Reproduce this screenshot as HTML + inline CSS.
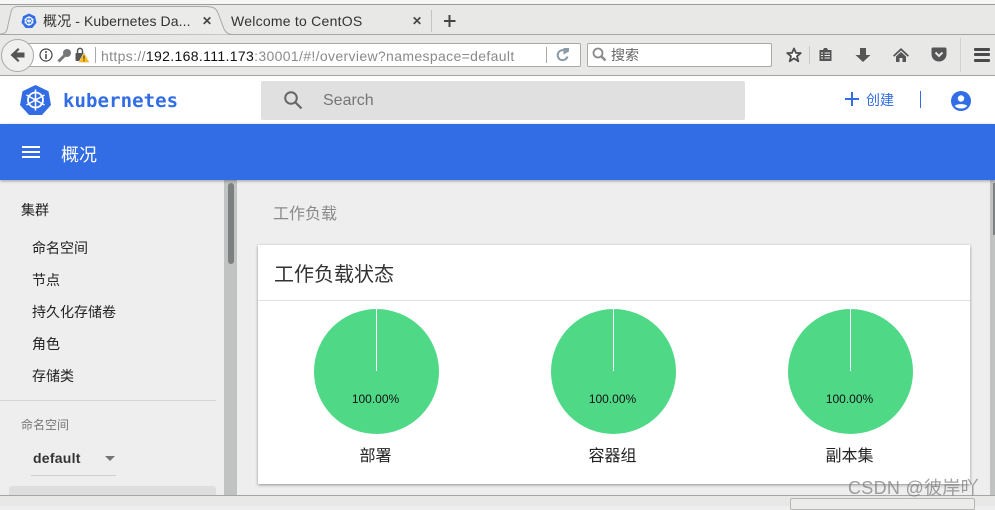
<!DOCTYPE html>
<html><head><meta charset="utf-8">
<style>
html,body{margin:0;padding:0;width:995px;height:506px;overflow:hidden;background:#eee;font-family:"Liberation Sans","Noto Sans CJK SC",sans-serif}
.a{position:absolute;white-space:nowrap}
svg{position:absolute;overflow:visible}
.cjk{font-family:"Liberation Sans","WenQuanYi Zen Hei","Noto Sans CJK SC",sans-serif}
.nav{left:32px;font-size:14px;color:#222;line-height:16px}
.lbl{font-size:16px;color:#222;line-height:20px;width:125px;text-align:center}
.pct{font-size:12px;color:#111;line-height:14px;width:125px;text-align:center}
</style></head><body>
<!-- browser chrome -->
<div class="a" style="left:0;top:0;width:995px;height:4px;background:#f6f6f5"></div>
<div class="a" style="left:0;top:4px;width:995px;height:1px;background:#9c9c9a"></div>
<div class="a" style="left:0;top:5px;width:995px;height:29px;background:#e8e8e7"></div>
<div class="a" style="left:0;top:34px;width:995px;height:1px;background:#a5a5a3"></div>
<div class="a" style="left:0;top:35px;width:995px;height:40px;background:#e8e8e7"></div>
<div class="a" style="left:0;top:75px;width:995px;height:1px;background:#a5a5a3"></div>
<svg style="left:0;top:5px" width="240" height="31"><path d="M0 29 C7 29 7 25 8 20 L11 7 C12 3 14 1.500 18 1.500 L205 1.500 C213 1.500 216 3 218 8 L224 24 C226 28 229 29.500 232 29.500" fill="#ebebea" stroke="#a9a9a7" stroke-width="1"/></svg>
<svg style="left:21px;top:13px" width="16" height="16" viewBox="0 0 16 16"><path d="M8 0.500 L14 3.300 L15.500 9.800 L11.300 15 L4.700 15 L0.500 9.800 L2 3.300Z" fill="#326de6"/><circle cx="8" cy="8" r="3.800" fill="none" stroke="#fff" stroke-width="1.100"/><path d="M8 3V13M3.500 6L12.500 10M12.500 6L3.500 10" stroke="#fff" stroke-width=".8"/></svg>
<div class="a cjk" style="left:43px;top:13px;font-size:14px;line-height:16px;color:#333;letter-spacing:.1px">概况 - Kubernetes Da...</div>
<div class="a" style="left:202px;top:12px;font-size:12px;font-weight:bold;line-height:18px;color:#444">✕</div>
<div class="a" style="left:231px;top:13px;font-size:14px;line-height:16px;color:#333;letter-spacing:.24px">Welcome to CentOS</div>
<div class="a" style="left:412px;top:12px;font-size:12px;font-weight:bold;line-height:18px;color:#444">✕</div>
<div class="a" style="left:431px;top:10px;width:1px;height:22px;background:#c4c4c2"></div>
<svg style="left:443px;top:14px" width="14" height="14"><path d="M6.500 1V13M1 7H12.500" stroke="#444" stroke-width="2"/></svg>
<!-- url bar -->
<div class="a" style="left:20px;top:43px;width:559px;height:22px;background:#fff;border:1px solid #a9a9a7;border-radius:2px"></div>
<div class="a" style="left:1px;top:39px;width:31px;height:31px;border-radius:50%;background:#f0f0ef;border:1px solid #a9a9a7"></div>
<svg style="left:9px;top:47px" width="17" height="16"><path d="M9 1 L1.500 8 L9 15 L10.500 13.500 L7.500 10.500 H15.500 V5.500 H7.500 L10.500 2.500Z" fill="#555"/></svg>
<svg style="left:39px;top:48px" width="14" height="14"><circle cx="7" cy="7" r="6" fill="#fff" stroke="#444" stroke-width="1.200"/><path d="M7 6V11M7 3V5" stroke="#444" stroke-width="1.500"/></svg>
<svg style="left:57px;top:48px" width="15" height="15"><circle cx="10" cy="5" r="4" fill="#777"/><path d="M8 7L1.500 13.500" stroke="#777" stroke-width="3"/></svg>
<svg style="left:75px;top:47px" width="15" height="16"><rect x="0.500" y="6" width="9" height="8" rx="1" fill="#555"/><path d="M2.500 6V4C2.500 0.500 7.500 0.500 7.500 4V6" fill="none" stroke="#555" stroke-width="1.500"/><path d="M9 5.500L14.500 15.500H3.500Z" fill="#fbbf24" stroke="#e8e8e7" stroke-width=".5"/><path d="M9 8.500V12.500M9 13.300V14.500" stroke="#333" stroke-width="1"/></svg>
<div class="a" style="left:95px;top:47px;width:1px;height:16px;background:#aaa"></div>
<div class="a" style="left:101px;top:48px;font-size:14px;line-height:16px;color:#8a8a8a;letter-spacing:.35px">https://<span style="color:#111">192.168.111.173</span>:30001/#!/overview?namespace=default</div>
<div class="a" style="left:546px;top:47px;width:1px;height:16px;background:#aaa"></div>
<svg style="left:556px;top:48px" width="14" height="14"><path d="M11.500 8.500A5 5 0 1 1 8.500 2.500" fill="none" stroke="#8a9aa8" stroke-width="2"/><path d="M7.500 0V6.500L13 3.500V0Z" fill="#8a9aa8"/></svg>
<!-- search -->
<div class="a" style="left:587px;top:43px;width:183px;height:22px;background:#fff;border:1px solid #a9a9a7;border-radius:2px"></div>
<svg style="left:592px;top:47px" width="15" height="15"><circle cx="6" cy="6" r="4.500" fill="none" stroke="#8a8a8a" stroke-width="1.800"/><path d="M9.500 9.500L13.500 13.500" stroke="#8a8a8a" stroke-width="2.400"/></svg>
<div class="a cjk" style="left:611px;top:47px;font-size:14px;line-height:16px;color:#666">搜索</div>
<!-- toolbar icons -->
<svg style="left:786px;top:47px" width="16" height="16" viewBox="0 0 16 16"><path d="M8 1.500L10 6H14.800L11 9.200L12.300 14.300L8 11.400L3.700 14.300L5 9.200L1.200 6H6Z" fill="#fff" stroke="#4f4f4f" stroke-width="1.800" stroke-linejoin="round"/></svg>
<div class="a" style="left:809px;top:46px;width:1px;height:18px;background:#c9c9c7"></div>
<svg style="left:818px;top:47px" width="15" height="15"><path d="M1.500 3H5L6 1H9L10 3H13.500V14H1.500Z" fill="#555"/><path d="M3 6H5M6.500 6H12M3 8.500H5M6.500 8.500H12M3 11H5M6.500 11H12" stroke="#eee" stroke-width="1"/></svg>
<svg style="left:855px;top:47px" width="16" height="16"><path d="M5 1H11V8H15.500L8 15L0.500 8H5Z" fill="#555"/></svg>
<svg style="left:893px;top:47px" width="16" height="16"><path d="M8 1L16 8.500L14.800 9.800L8 3.500L1.200 9.800L0 8.500Z" fill="#555"/><path d="M3 9.500L8 5L13 9.500V15H9.500V11H6.500V15H3Z" fill="#555"/></svg>
<svg style="left:931px;top:47px" width="16" height="15"><path d="M0.500 2C0.500 1 1 0.500 2 0.500H14C15 0.500 15.500 1 15.500 2V7C15.500 11.500 12 14.500 8 14.500C4 14.500 0.500 11.500 0.500 7Z" fill="#555"/><path d="M4.500 5.500L8 9L11.500 5.500" fill="none" stroke="#e8e8e7" stroke-width="2"/></svg>
<div class="a" style="left:960px;top:38px;width:1px;height:34px;background:#d2d2d0"></div>
<div class="a" style="left:974px;top:48px;width:16px;height:3px;background:#4a4a4a;border-radius:1px"></div>
<div class="a" style="left:974px;top:53px;width:16px;height:3px;background:#4a4a4a;border-radius:1px"></div>
<div class="a" style="left:974px;top:59px;width:16px;height:3px;background:#4a4a4a;border-radius:1px"></div>
<!-- k8s header -->
<div class="a" style="left:0;top:76px;width:995px;height:48px;background:#fff"></div>
<svg style="left:20px;top:85px" width="31" height="30" viewBox="0 0 31 30"><path d="M15.500 0L28.500 6.200L31 20L22 30H9L0 20L2.500 6.200Z" fill="#326de6" stroke-linejoin="round"/><circle cx="15.500" cy="15" r="7.500" fill="none" stroke="#fff" stroke-width="1.800"/><circle cx="15.500" cy="15" r="1.800" fill="#fff"/><path d="M15.500 4.500V25.500M6.500 10L24.500 20M24.500 10L6.500 20" stroke="#fff" stroke-width="1.500"/></svg>
<div class="a" style="left:63px;top:89px;font-family:'DejaVu Sans Mono','Liberation Mono',monospace;font-size:19px;font-weight:bold;line-height:24px;color:#326de6;letter-spacing:.08px">kubernetes</div>
<div class="a" style="left:261px;top:81px;width:484px;height:39px;background:#e0e0e0;border-radius:2px"></div>
<svg style="left:283px;top:90px" width="20" height="20"><circle cx="8" cy="8" r="5.800" fill="none" stroke="#666" stroke-width="2"/><path d="M12.500 12.500L18.500 18.500" stroke="#666" stroke-width="2.200"/></svg>
<div class="a" style="left:323px;top:92px;font-size:16px;line-height:18px;color:#757575">Search</div>
<svg style="left:845px;top:92px" width="14" height="14"><path d="M7 0V14M0 7H14" stroke="#326de6" stroke-width="2"/></svg>
<div class="a cjk" style="left:866px;top:92px;font-size:14px;line-height:16px;color:#326de6">创建</div>
<div class="a" style="left:920px;top:91px;width:1px;height:17px;background:#326de6"></div>
<svg style="left:951px;top:91px" width="20" height="20"><circle cx="10" cy="10" r="10" fill="#326de6"/><circle cx="10" cy="7.500" r="3.200" fill="#fff"/><path d="M3.800 15C5 12.500 15 12.500 16.200 15C14.500 17 12 17.500 10 17.500C8 17.500 5.500 17 3.800 15Z" fill="#fff"/></svg>
<!-- blue bar -->
<div class="a" style="left:0;top:124px;width:995px;height:56px;background:#326de6;box-shadow:0 1px 3px rgba(0,0,0,.35);z-index:3"></div>
<div class="a" style="left:22px;top:146px;width:18px;height:2px;background:#fff;z-index:4"></div>
<div class="a" style="left:22px;top:151px;width:18px;height:2px;background:#fff;z-index:4"></div>
<div class="a" style="left:22px;top:156px;width:18px;height:2px;background:#fff;z-index:4"></div>
<div class="a cjk" style="left:61px;top:145px;font-size:18px;line-height:20px;color:#fff;z-index:4">概况</div>
<!-- sidebar -->
<div class="a" style="left:224px;top:180px;width:13px;height:316px;background:#c1c3c2"></div>
<div class="a" style="left:228px;top:183px;width:6px;height:81px;background:#7c8080;border-radius:3px"></div>
<div class="a cjk nav" style="left:21px;top:202px">集群</div>
<div class="a cjk nav" style="top:240px">命名空间</div>
<div class="a cjk nav" style="top:272px">节点</div>
<div class="a cjk nav" style="top:304px">持久化存储卷</div>
<div class="a cjk nav" style="top:336px">角色</div>
<div class="a cjk nav" style="top:368px">存储类</div>
<div class="a" style="left:0;top:400px;width:216px;height:1px;background:#d6d6d6"></div>
<div class="a cjk" style="left:21px;top:418px;font-size:12px;line-height:14px;color:#777">命名空间</div>
<div class="a" style="left:33px;top:450px;font-size:14px;font-weight:bold;line-height:16px;color:#333;letter-spacing:.25px">default</div>
<div class="a" style="left:105px;top:456px;width:0;height:0;border-left:5px solid transparent;border-right:5px solid transparent;border-top:5px solid #757575"></div>
<div class="a" style="left:31px;top:475px;width:85px;height:1px;background:#d0d0d0"></div>
<div class="a" style="left:9px;top:486px;width:207px;height:10px;background:#dedede;border-radius:3px 3px 0 0"></div>
<!-- content -->
<div class="a cjk" style="left:273px;top:205px;font-size:16px;line-height:20px;color:#8a8a8a">工作负载</div>
<div class="a" style="left:258px;top:245px;width:712px;height:239px;background:#fff;box-shadow:0 1px 3px rgba(0,0,0,.4)"></div>
<div class="a cjk" style="left:274px;top:263px;font-size:20px;line-height:24px;color:#333">工作负载状态</div>
<div class="a" style="left:258px;top:300px;width:712px;height:1px;background:#e0e0e0"></div>
<div class="a" style="left:314px;top:308.500px;width:125px;height:125px;border-radius:50%;background:#4fd987"></div>
<div class="a" style="left:376px;top:308px;width:1px;height:63px;background:#fff"></div>
<div class="a pct" style="left:313px;top:392px">100.00%</div>
<div class="a cjk lbl" style="left:313px;top:447px">部署</div>
<div class="a" style="left:551px;top:308.500px;width:125px;height:125px;border-radius:50%;background:#4fd987"></div>
<div class="a" style="left:613px;top:308px;width:1px;height:63px;background:#fff"></div>
<div class="a pct" style="left:550px;top:392px">100.00%</div>
<div class="a cjk lbl" style="left:550px;top:447px">容器组</div>
<div class="a" style="left:788px;top:308.500px;width:125px;height:125px;border-radius:50%;background:#4fd987"></div>
<div class="a" style="left:850px;top:308px;width:1px;height:63px;background:#fff"></div>
<div class="a pct" style="left:787px;top:392px">100.00%</div>
<div class="a cjk lbl" style="left:787px;top:447px">副本集</div>
<!-- right scrollbar -->
<div class="a" style="left:990px;top:180px;width:5px;height:316px;background:#c1c3c2"></div>
<div class="a" style="left:993px;top:183px;width:2px;height:52px;background:#7c8080"></div>
<!-- status bar -->
<div class="a" style="left:0;top:495px;width:995px;height:1px;background:#a5a5a3"></div>
<div class="a" style="left:0;top:496px;width:995px;height:10px;background:#e8e8e7"></div>
<div class="a" style="left:790px;top:498px;width:183px;height:10px;border:1px solid #b5b5b3;border-radius:2px;background:#ececeb"></div>
<!-- watermark -->
<div class="a cjk" style="left:848px;top:477px;font-size:18px;line-height:22px;color:rgba(120,120,120,.7);z-index:6;letter-spacing:.3px">CSDN @彼岸吖</div>
</body></html>
